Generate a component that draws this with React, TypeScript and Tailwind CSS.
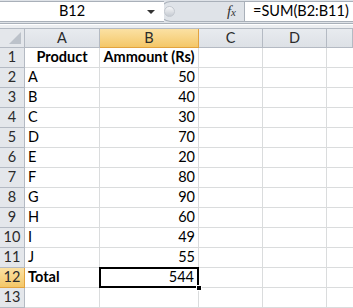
import React from 'react';

const rows: { label: string; value: string; bold?: boolean }[] = [
  { label: 'A', value: '50' },
  { label: 'B', value: '40' },
  { label: 'C', value: '30' },
  { label: 'D', value: '70' },
  { label: 'E', value: '20' },
  { label: 'F', value: '80' },
  { label: 'G', value: '90' },
  { label: 'H', value: '60' },
  { label: 'I', value: '49' },
  { label: 'J', value: '55' },
];

const colClass = 'grid grid-cols-[25px_75px_99px_64px_64px_1fr]';

function ColHeader({ label, active }: { label: string; active?: boolean }) {
  return (
    <div
      className={
        active
          ? 'flex items-center justify-center border-r border-b border-[#e2a33f] bg-gradient-to-b from-[#fbe1a3] to-[#f4c767] text-[#2b2b2b]'
          : 'flex items-center justify-center border-r border-b border-[#b4bac3] bg-gradient-to-b from-[#e8ebef] to-[#dde1e6] text-[#2b2b2b]'
      }
    >
      {label}
    </div>
  );
}

function RowHeader({ n, active }: { n: number; active?: boolean }) {
  return (
    <div
      className={
        active
          ? 'flex items-center justify-center border-r border-b border-[#e2a33f] bg-gradient-to-b from-[#fbe1a3] to-[#f4c767] text-[#2b2b2b]'
          : 'flex items-center justify-center border-r border-b border-[#b4bac3] bg-[#e4e7eb] text-[#2b2b2b]'
      }
    >
      {n}
    </div>
  );
}

export default function App() {
  return (
    <div className="h-[308px] w-[353px] overflow-hidden bg-white font-[Lato,'Liberation_Sans',sans-serif] text-[14.5px] leading-none text-black">
      {/* Formula bar */}
      <div className="flex h-[24px] border-b border-[#a9b0b9] bg-[#dfe3e8] pt-[1px]">
        <div className="relative flex h-[21px] w-[164px] items-center border-y border-[#a9b0b9] bg-white">
          <span className="w-[144px] text-center">B12</span>
          <svg width="8" height="5" viewBox="0 0 8 5" className="absolute left-[147px] top-[8px]">
            <polygon points="0,0 8,0 4,4" fill="#333" />
          </svg>
        </div>
        <div className="-ml-[4px] flex h-[21px] w-[84px] items-center rounded-l-[11px] border-y border-l border-[#a9b0b9] bg-[#dfe3e8]">
          <div className="ml-[3px] h-[11px] w-[11px] rounded-full border border-[#c3c8cf] bg-gradient-to-b from-[#f6f7f9] to-[#c6cbd2]" />
          <span className="ml-auto mr-[8px] font-['Liberation_Serif',serif] text-[15px] italic text-[#333]">
            f<span className="text-[11px]">x</span>
          </span>
        </div>
        <div className="flex h-[21px] flex-1 items-center border border-r-0 border-[#a9b0b9] bg-white pl-[8px]">
          =SUM(B2:B11)
        </div>
      </div>
      <div className="h-[4px] border-t border-white bg-[#eceef1]" />

      {/* Header row */}
      <div className={`${colClass} h-[20px] border-t border-[#b4bac3]`}>
        <div className="relative border-r border-b border-[#b4bac3] bg-[#e4e7eb]">
          <svg width="12" height="12" viewBox="0 0 12 12" className="absolute right-[3px] bottom-[3px]">
            <polygon points="12,0 12,12 0,12" fill="#bcc2ca" />
          </svg>
        </div>
        <ColHeader label="A" />
        <ColHeader label="B" active />
        <ColHeader label="C" />
        <ColHeader label="D" />
        <ColHeader label="" />
      </div>

      {/* Row 1: titles */}
      <div className={`${colClass} h-[20px]`}>
        <RowHeader n={1} />
        <div className="flex items-center justify-center border-r border-b border-[#dadcdd] font-bold">Product</div>
        <div className="flex items-center justify-center border-r border-b border-[#dadcdd] font-bold">Ammount (Rs)</div>
        <div className="border-r border-b border-[#dadcdd]" />
        <div className="border-r border-b border-[#dadcdd]" />
        <div className="border-b border-[#dadcdd]" />
      </div>

      {rows.map((r, i) => (
        <div key={r.label} className={`${colClass} h-[20px]`}>
          <RowHeader n={i + 2} />
          <div className="flex items-center border-r border-b border-[#dadcdd] pl-[3px]">{r.label}</div>
          <div className="flex items-center justify-end border-r border-b border-[#dadcdd] pr-[3px]">{r.value}</div>
          <div className="border-r border-b border-[#dadcdd]" />
          <div className="border-r border-b border-[#dadcdd]" />
          <div className="border-b border-[#dadcdd]" />
        </div>
      ))}

      {/* Row 12: total */}
      <div className={`${colClass} h-[20px]`}>
        <RowHeader n={12} active />
        <div className="flex items-center border-r border-b border-[#dadcdd] pl-[3px] font-bold">Total</div>
        <div className="relative flex items-center justify-end border-r border-b border-[#dadcdd] pr-[4px]">
          544
          <div className="absolute -top-[1px] -left-[1px] -right-[1px] -bottom-[1px] border-2 border-black" />
          <div className="absolute -right-[4px] -bottom-[4px] h-[6px] w-[6px] border border-white bg-black" />
        </div>
        <div className="border-r border-b border-[#dadcdd]" />
        <div className="border-r border-b border-[#dadcdd]" />
        <div className="border-b border-[#dadcdd]" />
      </div>

      {/* Row 13 */}
      <div className={`${colClass} h-[20px]`}>
        <RowHeader n={13} />
        <div className="border-r border-b border-[#dadcdd]" />
        <div className="border-r border-b border-[#dadcdd]" />
        <div className="border-r border-b border-[#dadcdd]" />
        <div className="border-r border-b border-[#dadcdd]" />
        <div className="border-b border-[#dadcdd]" />
      </div>
    </div>
  );
}
